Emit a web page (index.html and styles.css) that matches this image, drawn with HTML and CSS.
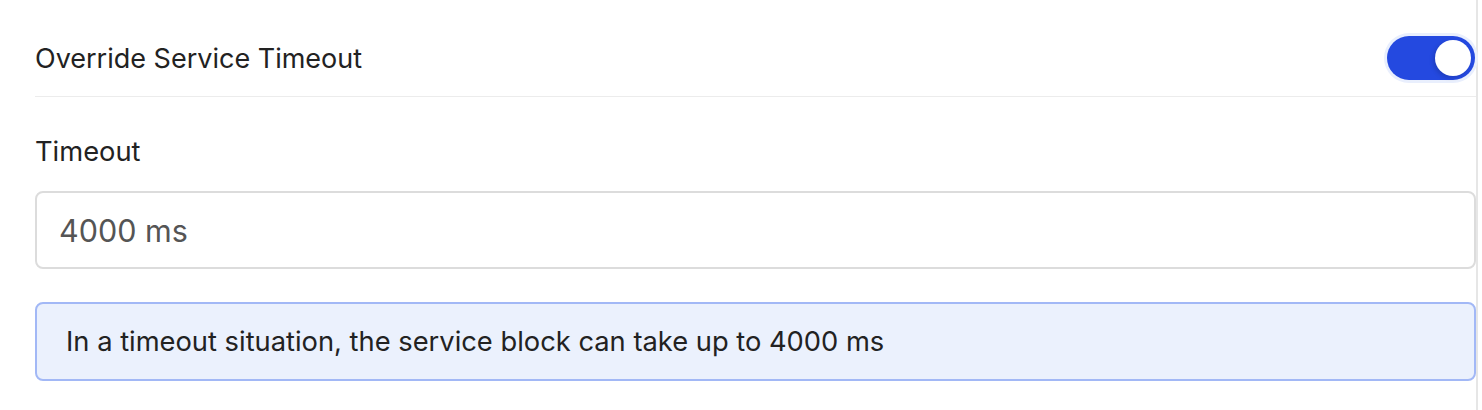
FILE: index.html
```html
<!DOCTYPE html>
<html>
<head>
<meta charset="utf-8">
<link rel="stylesheet" href="styles.css">
</head>
<body>
<div class="panel">
  <div class="row">
    <span class="row-label">Override Service Timeout</span>
    <span class="toggle"><span class="knob"></span></span>
  </div>
  <div class="field">
    <label class="field-label">Timeout</label>
    <div class="input">4000 ms</div>
    <div class="info">In a timeout situation, the service block can take up to 4000 ms</div>
  </div>
</div>
</body>
</html>
```
FILE: styles.css
```css
html, body {
  margin: 0;
  background: #ffffff;
}
body {
  font-family: Inter, "Noto Sans", sans-serif;
  color: #222222;
}
.panel {
  width: 1441px;
  padding-left: 35px;
  height: 410px;
  border-right: 2px solid #e6e6e6;
}
.row {
  display: flex;
  align-items: center;
  justify-content: space-between;
  border-bottom: 1px solid #ececec;
  padding-top: 20px;
  box-sizing: border-box;
  height: 97px;
}
.row-label {
  font-size: 27px;
  line-height: 34px;
  padding-top: 2px;
}
.toggle {
  width: 88px;
  height: 44px;
  border-radius: 22px;
  background: #2449e0;
  box-shadow: 0 0 0 3px #e9effd;
  display: flex;
  align-items: center;
  justify-content: flex-end;
  padding-right: 4px;
  box-sizing: border-box;
  margin-right: 1px;
}
.knob {
  width: 36px;
  height: 36px;
  border-radius: 50%;
  background: #ffffff;
  box-shadow: -2px 2px 4px rgba(0, 0, 0, 0.15);
}
.field {
  padding-top: 38px;
}
.field-label {
  display: block;
  font-size: 27.3px;
  line-height: 34px;
}
.input {
  margin-top: 22px;
  height: 78px;
  box-sizing: border-box;
  border: 2px solid #dcdcdc;
  border-radius: 8px;
  padding-left: 22px;
  display: flex;
  align-items: center;
  font-size: 30.5px;
  color: #555555;
}
.info {
  margin-top: 33px;
  height: 79px;
  box-sizing: border-box;
  border: 2px solid #a2b8f6;
  border-radius: 8px;
  background: #ebf1fd;
  padding-left: 29px;
  display: flex;
  align-items: center;
  font-size: 27.3px;
  color: #222222;
}
```
